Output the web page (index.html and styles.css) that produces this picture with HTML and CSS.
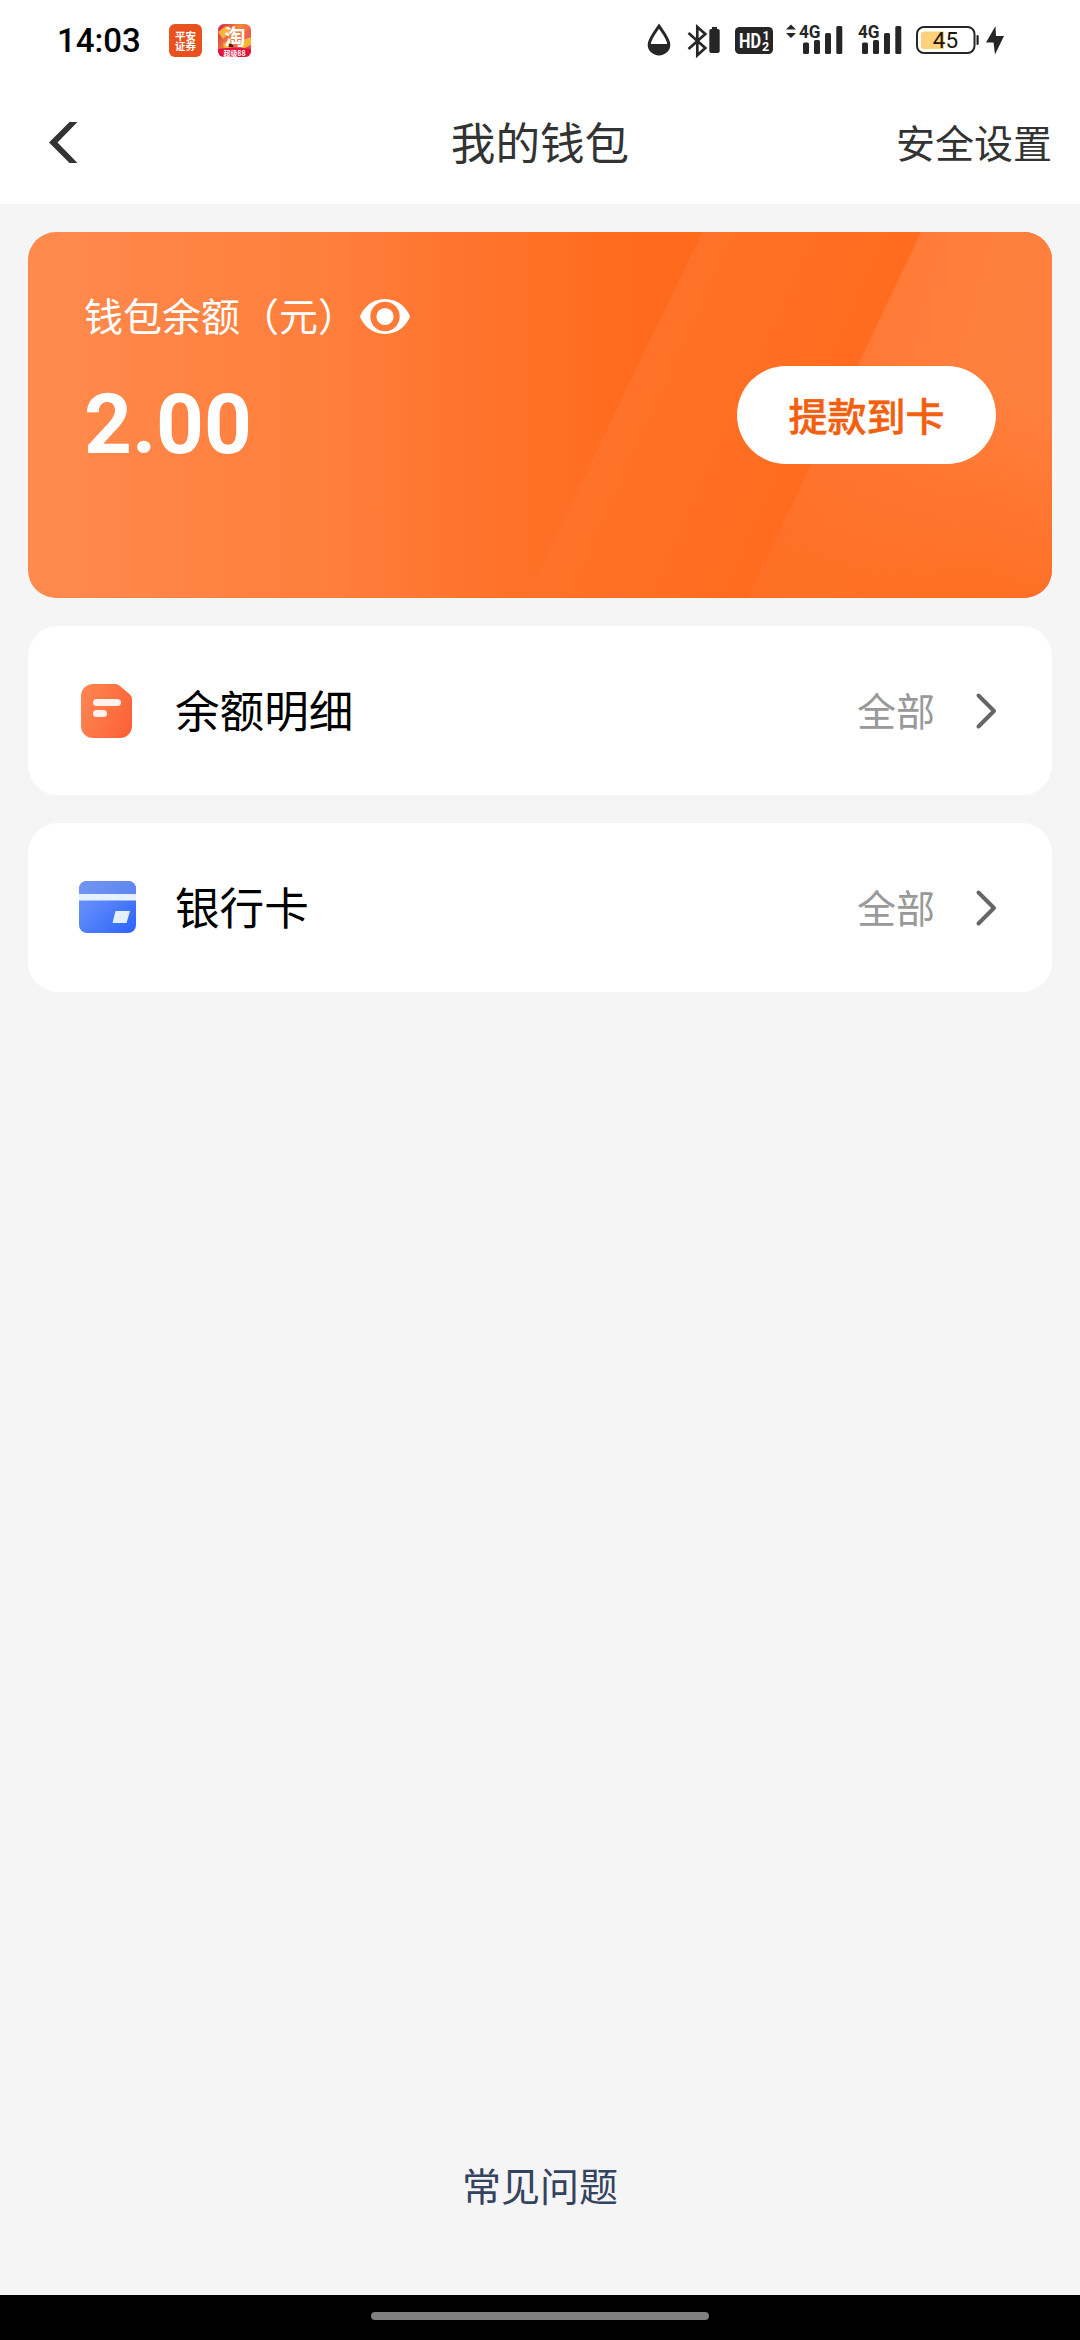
FILE: index.html
```html
<!DOCTYPE html>
<html lang="zh-CN">
<head>
<meta charset="utf-8">
<title>我的钱包</title>
<link rel="stylesheet" href="styles.css">
</head>
<body>
<div class="screen">
  <div class="status-bar">
    <span class="clock">14:03</span>
    <svg class="app-icon" width="33" height="33" viewBox="0 0 33 33">
      <rect width="33" height="33" rx="6" fill="#e9511f"/>
      <g fill="#fff" font-size="10" font-weight="700" text-anchor="middle">
        <text x="16.5" y="15.500" textLength="21" lengthAdjust="spacingAndGlyphs">平安</text>
        <text x="16.5" y="25.500" textLength="21" lengthAdjust="spacingAndGlyphs">证券</text>
      </g>
    </svg>
    <svg class="app-icon app-icon-tao" width="33" height="33" viewBox="0 0 33 33">
      <defs>
        <clipPath id="tao-clip"><rect width="33" height="33" rx="6"/></clipPath>
        <linearGradient id="tao-bg" x1="0" y1="0" x2="1" y2="0.6">
          <stop offset="0" stop-color="#d9204a"/><stop offset="0.5" stop-color="#f08a3c"/><stop offset="1" stop-color="#e8485a"/>
        </linearGradient>
      </defs>
      <g clip-path="url(#tao-clip)">
        <rect width="33" height="33" fill="url(#tao-bg)"/>
        <path d="M0 8l8-6 4 6-7 7zM22 17l11-4v8l-9 4zM5 20l7-4 3 6-8 3z" fill="#f7b53c"/>
        <path d="M9 19l5 1 2 3-5 0z" fill="#5a1c16"/>
        <path d="M0 25q16-3 33 0v8H0z" fill="#e0143c"/>
      </g>
      <text x="17" y="19.500" font-size="21" font-weight="700" fill="#fff" text-anchor="middle">淘</text>
      <text x="16.5" y="31.500" font-size="7" font-weight="700" fill="#fff" text-anchor="middle" textLength="22" lengthAdjust="spacingAndGlyphs">超级88</text>
    </svg>
    <div class="indicators">
      <svg class="drop" width="24" height="34" viewBox="0 0 24 34">
        <path d="M12 3.200C8 9 2.200 16 2.200 21.700a9.800 9.300 0 0 0 19.600 0C21.800 16 16 9 12 3.200z" fill="#fff" stroke="#262626" stroke-width="3"/>
        <path d="M2.200 21h19.600a9.800 10 0 0 1-19.600 0z" fill="#262626"/>
      </svg>
      <svg class="bluetooth" width="33" height="34" viewBox="0 0 33 34">
        <path d="M1.500 9L18.300 24 10.300 31.200V3L18.300 10 1.500 25" fill="none" stroke="#262626" stroke-width="2.700"/>
        <path d="M25 3h5v2h1a1.700 1.700 0 0 1 1.700 1.700V27a2 2 0 0 1-2 2h-6.400a2 2 0 0 1-2-2V6.700A1.700 1.700 0 0 1 24 5h1z" fill="#262626"/>
      </svg>
      <svg class="hd" width="38" height="27" viewBox="0 0 38 27">
        <rect width="38" height="27" rx="4.500" fill="#262626"/>
        <g class="digits" fill="#fff" font-weight="700">
          <text x="4" y="20.500" font-size="20" textLength="22" lengthAdjust="spacingAndGlyphs">HD</text>
          <text x="27.500" y="13" font-size="12.500">1</text>
          <text x="27" y="24" font-size="12.500">2</text>
        </g>
      </svg>
      <svg class="signal-data" width="57" height="32" viewBox="0 0 57 32">
        <path d="M0 5.500L5 .5l5 5zM0 9h10l-5 5z" fill="#262626"/>
        <text class="digits" x="13" y="13.800" font-size="18.500" font-weight="700" fill="#262626" textLength="21.500" lengthAdjust="spacingAndGlyphs">4G</text>
        <g fill="#262626">
          <rect x="17" y="18.500" width="6" height="11.500" rx="1.500"/>
          <rect x="28" y="16" width="6" height="14" rx="1.500"/>
          <rect x="39" y="9" width="6" height="21" rx="1.500"/>
          <rect x="50.300" y="2" width="6" height="28" rx="1.500"/>
        </g>
      </svg>
      <svg class="signal" width="44" height="32" viewBox="0 0 44 32">
        <text class="digits" x="0" y="13.800" font-size="18.500" font-weight="700" fill="#262626" textLength="21.500" lengthAdjust="spacingAndGlyphs">4G</text>
        <g fill="#262626">
          <rect x="4" y="18.500" width="6" height="11.500" rx="1.500"/>
          <rect x="15" y="16" width="6" height="14" rx="1.500"/>
          <rect x="26" y="9" width="6" height="21" rx="1.500"/>
          <rect x="37.300" y="2" width="6" height="28" rx="1.500"/>
        </g>
      </svg>
      <svg class="battery" width="63" height="28" viewBox="0 0 63 28">
        <rect x="1" y="1" width="57.500" height="26" rx="7" fill="#fff" stroke="#262626" stroke-width="2"/>
        <path d="M8 5.500H28v17.500H8a3 3 0 0 1-3-3V8.500a3 3 0 0 1 3-3z" fill="#ffd27b"/>
        <rect x="60.500" y="9" width="2.200" height="10" rx="1" fill="#262626"/>
        <text class="digits" x="29.500" y="22" font-size="22.500" fill="#1c1608" text-anchor="middle">45</text>
      </svg>
      <svg class="bolt" width="18" height="29" viewBox="0 0 18 29">
        <path d="M9.500 0L0 16.500h7.500L9 28.500l9-18.500h-8z" fill="#262626"/>
      </svg>
    </div>
  </div>

  <header class="nav">
    <svg class="back" width="29" height="41" viewBox="0 0 29 41">
      <path d="M20.500 0H28.500L8.500 20.500 28.500 41H20.500L0 20.500z" fill="#333"/>
    </svg>
    <h1 class="title">我的钱包</h1>
    <span class="settings">安全设置</span>
  </header>

  <main class="content">
    <section class="balance">
      <svg class="balance-art" width="1024" height="366" viewBox="0 0 1024 366">
        <defs>
          <linearGradient id="base" x1="0" x2="1" y1="0" y2="0">
            <stop offset="0" stop-color="#ff8a4e"/><stop offset="0.300" stop-color="#ff7e3b"/><stop offset="0.450" stop-color="#ff732b"/><stop offset="0.620" stop-color="#ff691b"/><stop offset="1" stop-color="#ff691b"/>
          </linearGradient>
          <linearGradient id="band" gradientUnits="userSpaceOnUse" x1="580" y1="160" x2="800" y2="260">
            <stop offset="0" stop-color="#ff7229"/><stop offset="1" stop-color="#ff6b1e"/>
          </linearGradient>
          <linearGradient id="corner" gradientUnits="userSpaceOnUse" x1="960" y1="150" x2="890" y2="366">
            <stop offset="0" stop-color="#ff803e"/><stop offset="1" stop-color="#ff6d21"/>
          </linearGradient>
          <linearGradient id="corner-side" gradientUnits="userSpaceOnUse" x1="800" y1="0" x2="1024" y2="60">
            <stop offset="0" stop-color="#ff7028" stop-opacity="0.700"/><stop offset="1" stop-color="#ff7d39" stop-opacity="0"/>
          </linearGradient>
        </defs>
        <rect width="1024" height="366" fill="url(#base)"/>
        <path d="M674 0H893L720 366H498z" fill="url(#band)"/>
        <path d="M893 0H1024V366H720z" fill="url(#corner)"/>
        <path d="M893 0H1024V366H720z" fill="url(#corner-side)"/>
      </svg>
      <div class="balance-info">
        <div class="balance-label">
          <span class="label-text">钱包余额（元）</span>
          <svg class="eye" width="50" height="35" viewBox="0 0 50 35">
            <path d="M25 0C38 0 47 9 50 17.500 47 26 38 35 25 35S3 26 0 17.500C3 9 12 0 25 0z" fill="#fff"/>
            <circle cx="25" cy="17.500" r="14.700" fill="#ff7a37"/>
            <circle cx="25" cy="17.500" r="8.600" fill="#fff"/>
          </svg>
        </div>
        <div class="amount">2.00</div>
      </div>
      <button class="withdraw">提款到卡</button>
    </section>

    <section class="row">
      <svg class="row-icon" width="58" height="58" viewBox="0 0 58 58">
        <defs>
          <linearGradient id="doc" x1="0" y1="0.300" x2="1" y2="0.700">
            <stop offset="0" stop-color="#ff8450"/><stop offset="1" stop-color="#fc6238"/>
          </linearGradient>
        </defs>
        <path d="M15 2H37q3 0 5 2L52 12.500q2 2 2 5V44a12 12 0 0 1-12 12H15A12 12 0 0 1 3 44V14A12 12 0 0 1 15 2z" fill="url(#doc)"/>
        <rect x="15" y="17" width="28" height="7" rx="3.500" fill="#fff2ea"/>
        <rect x="15" y="28" width="14" height="7" rx="3.500" fill="#fff2ea"/>
      </svg>
      <span class="row-name">余额明细</span>
      <span class="row-more">全部</span>
      <svg class="chevron" width="21" height="36" viewBox="0 0 21 36">
        <path d="M2.500 2.500L18 18 2.500 33.500" fill="none" stroke="#666" stroke-width="4" stroke-linecap="round" stroke-linejoin="round"/>
      </svg>
    </section>

    <section class="row">
      <svg class="row-icon" width="58" height="58" viewBox="0 0 58 58">
        <defs>
          <linearGradient id="card" x1="0" y1="0" x2="1" y2="1">
            <stop offset="0" stop-color="#759af8"/><stop offset="0.450" stop-color="#5583fb"/><stop offset="1" stop-color="#2b62fb"/>
          </linearGradient>
          <linearGradient id="card-top" x1="0" y1="0" x2="1" y2="0">
            <stop offset="0" stop-color="#7294f2"/><stop offset="1" stop-color="#5f86f2"/>
          </linearGradient>
        </defs>
        <rect x="1" y="2" width="57" height="52" rx="8" fill="url(#card)"/>
        <path d="M1 15V10a8 8 0 0 1 8-8H50a8 8 0 0 1 8 8v5z" fill="url(#card-top)"/>
        <rect x="1" y="15" width="57" height="6.500" fill="#e6f1ff"/>
        <path d="M37.500 32H52L48.500 44H34.500z" fill="#e2efff"/>
      </svg>
      <span class="row-name">银行卡</span>
      <span class="row-more">全部</span>
      <svg class="chevron" width="21" height="36" viewBox="0 0 21 36">
        <path d="M2.500 2.500L18 18 2.500 33.500" fill="none" stroke="#666" stroke-width="4" stroke-linecap="round" stroke-linejoin="round"/>
      </svg>
    </section>

    <a class="faq">常见问题</a>
  </main>

  <div class="gesture-bar"><div class="gesture-pill"></div></div>
</div>
</body>
</html>
```
FILE: styles.css
```css
* { box-sizing: border-box; }
body {
  margin: 0;
  background: #f5f5f5;
  font-family: "Noto Sans CJK SC", sans-serif;
  color: #333;
}
svg { display: block; flex: none; overflow: visible; }
.digits { font-family: Roboto, sans-serif; }

.screen {
  width: 1080px;
  height: 2340px;
  display: flex;
  flex-direction: column;
  overflow: hidden;
}

.status-bar {
  height: 82px;
  background: #fff;
  display: flex;
  align-items: flex-start;
  padding: 24px 76px 0 57px;
}
.clock {
  width: 112px;
  font: 500 33px/34px Roboto, sans-serif;
  color: #000;
}
.app-icon-tao { margin-left: 16px; }
.indicators { display: flex; margin-left: auto; }
.drop { margin-top: -1px; }
.bluetooth { margin-left: 16px; }
.hd { margin: 3px 0 0 15px; }
.signal-data { margin-left: 13px; }
.signal { margin-left: 15px; }
.battery { margin: 2px 0 0 14px; }
.bolt { margin: 2px 0 0 7px; }

.nav {
  height: 122px;
  background: #fff;
  display: grid;
  grid-template-columns: 1fr auto 1fr;
  align-items: center;
  padding: 0 28px 0 49px;
}
.back { margin-bottom: 1px; }
.title {
  margin: 0 0 4px;
  font-size: 44.600px;
  font-weight: 400;
  line-height: 60px;
  transform: translateX(-10.500px);
}
.settings {
  justify-self: end;
  margin-bottom: 4px;
  font-size: 39px;
  line-height: 56px;
}

.content {
  flex: 1;
  display: flex;
  flex-direction: column;
  gap: 28px;
  padding: 28px 28px 0;
}

.balance {
  position: relative;
  height: 366px;
  border-radius: 28px;
  overflow: hidden;
  display: flex;
  justify-content: space-between;
  padding: 0 56px;
  color: #fff;
}
.balance-art { position: absolute; inset: 0; }
.balance-info { position: relative; padding-top: 56px; }
.balance-label {
  display: flex;
  align-items: center;
  gap: 3px;
  height: 56px;
  font-size: 39px;
  line-height: 56px;
}
.label-text { padding-bottom: 5px; }
.amount {
  margin-top: 32px;
  font: 700 83.500px/98px Roboto, sans-serif;
}
.withdraw {
  position: relative;
  margin-top: 134px;
  width: 259px;
  height: 98px;
  padding: 0 0 2px;
  border: 0;
  border-radius: 49px;
  background: #fff;
  color: #f2600f;
  font: 500 39px/96px "Noto Sans CJK SC", sans-serif;
  -webkit-text-stroke: 0.500px #f2600f;
}

.row {
  height: 169px;
  border-radius: 30px;
  background: #fff;
  display: flex;
  align-items: center;
  padding: 0 55px 0 50px;
}
.row-name {
  margin: 0 0 3px 39px;
  font-size: 44.600px;
  line-height: 60px;
  color: #000;
}
.row-more {
  margin: 0 0 3px auto;
  font-size: 39px;
  line-height: 56px;
  color: #999;
}
.chevron { margin-left: 41px; }

.faq {
  margin: auto auto 83px;
  font-size: 39px;
  line-height: 56px;
  color: #34435f;
}

.gesture-bar {
  height: 45px;
  background: #000;
  display: flex;
  justify-content: center;
  padding-top: 17px;
}
.gesture-pill {
  width: 338px;
  height: 8px;
  border-radius: 4px;
  background: #808080;
}
```
